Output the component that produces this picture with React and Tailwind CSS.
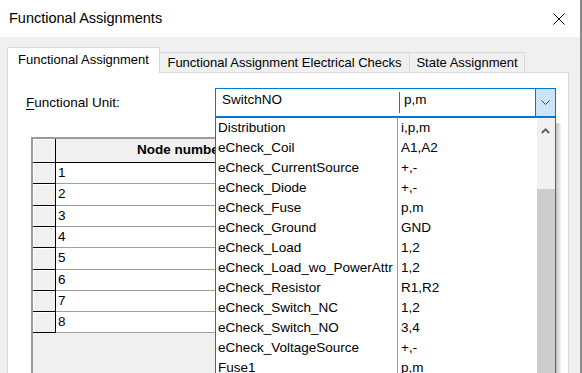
import React from "react";

const listItems = [
  ["Distribution", "i,p,m"],
  ["eCheck_Coil", "A1,A2"],
  ["eCheck_CurrentSource", "+,-"],
  ["eCheck_Diode", "+,-"],
  ["eCheck_Fuse", "p,m"],
  ["eCheck_Ground", "GND"],
  ["eCheck_Load", "1,2"],
  ["eCheck_Load_wo_PowerAttr", "1,2"],
  ["eCheck_Resistor", "R1,R2"],
  ["eCheck_Switch_NC", "1,2"],
  ["eCheck_Switch_NO", "3,4"],
  ["eCheck_VoltageSource", "+,-"],
  ["Fuse1", "p,m"],
];

const gridRows = [
  { n: "1", h: "h-[21px]" },
  { n: "2", h: "h-[22px]" },
  { n: "3", h: "h-[21px]" },
  { n: "4", h: "h-[21px]" },
  { n: "5", h: "h-[22px]" },
  { n: "6", h: "h-[21px]" },
  { n: "7", h: "h-[21px]" },
  { n: "8", h: "h-[21px]" },
];

export default function App() {
  return (
    <div className="relative w-[582px] h-[373px] overflow-hidden bg-[#f0f0f0] border-r-2 border-[#8a8a8a] font-['Liberation_Sans',Arial,sans-serif] text-black">
      {/* Title bar */}
      <div className="h-[37px] bg-white flex items-center justify-between pl-[9px] pr-[15px]">
        <span className="text-[14.5px] leading-none">Functional Assignments</span>
        <svg width="12" height="12" viewBox="0 0 12 12" className="block">
          <path d="M0.5 0.5 L11.5 11.5 M11.5 0.5 L0.5 11.5" stroke="#000" strokeWidth="1" fill="none" />
        </svg>
      </div>

      {/* Tabs */}
      <div className="mt-[10px] pl-[7px] flex items-end h-[25px] text-[13px]">
        <div className="relative z-10 w-[153px] h-[26px] -mb-px bg-white border border-b-0 border-[#d9d9d9] flex items-center justify-center pb-[2px]">
          Functional Assignment
        </div>
        <div className="w-[251px] h-[20px] -ml-px bg-[#f0f0f0] border border-b-0 border-[#d9d9d9] flex items-center justify-center">
          Functional Assignment Electrical Checks
        </div>
        <div className="w-[116px] h-[20px] -ml-px bg-[#f0f0f0] border border-b-0 border-[#d9d9d9] flex items-center justify-center">
          State Assignment
        </div>
      </div>

      {/* Panel */}
      <div className="ml-[7px] w-[562px] h-[320px] bg-white border border-[#d9d9d9] pt-[15px] text-[13.5px]">
        <div className="flex items-center">
          <div className="w-[207px] pl-[18px] leading-4">
            <span className="underline underline-offset-2">F</span>unctional Unit:
          </div>
          <div className="w-[341px] h-[29px] border border-[#0078d7] flex">
            <div className="w-[183px] pl-[6px] pt-[3px] leading-4">SwitchNO</div>
            <div className="w-px h-[21px] mt-[3px] bg-[#606060]" />
            <div className="flex-1 pl-[4px] pt-[3px] leading-4">p,m</div>
            <div className="w-[20px] h-full bg-[#cce4f7] border-l border-[#0078d7] flex items-center justify-center">
              <svg width="9" height="5" viewBox="0 0 9 5" className="block">
                <path d="M0.5 0.5 L4.5 4.5 L8.5 0.5" stroke="#444" strokeWidth="1" fill="none" />
              </svg>
            </div>
          </div>
        </div>

        {/* Grid */}
        <div className="mt-[20px] ml-[23px] w-[500px] h-[240px] border-t-2 border-l-2 border-[#9a9a9a] bg-[#f0f0f0] flex flex-col">
          <div className="flex h-[24px]">
            <div className="w-[23px] bg-[#f0f0f0] border-r border-b border-black shadow-[inset_1px_1px_0_#ffffff]" />
            <div className="w-[250px] bg-[#f0f0f0] border-r border-b border-black flex items-center justify-center font-bold">
              Node number
            </div>
            <div className="flex-1 bg-[#f0f0f0] border-b border-black" />
          </div>
          {gridRows.map((r) => (
            <div key={r.n} className={`flex ${r.h}`}>
              <div className="w-[23px] bg-[#f0f0f0] border-r border-b border-black shadow-[inset_1px_1px_0_#ffffff]" />
              <div className="w-[250px] bg-white border-r border-b border-[#a0a0a0] pl-[2px] flex items-center">
                {r.n}
              </div>
              <div className="flex-1 bg-white border-b border-[#a0a0a0]" />
            </div>
          ))}
        </div>
      </div>

      {/* Dropdown shadow */}
      <div className="absolute left-[556px] top-[123px] w-[5px] h-[260px] bg-gradient-to-r from-[#c4c4c4] to-[#f2f2f2]" />

      {/* Dropdown list */}
      <div className="absolute left-[215px] top-[117px] w-[341px] h-[270px] bg-white border-x border-t border-[#0078d7] text-[13.5px]">
        {listItems.map(([a, b]) => (
          <div key={a} className="flex h-[20px]">
            <div className="w-[182px] pl-[2px] border-r border-[#a0a0a0] flex items-center whitespace-nowrap overflow-hidden">
              {a}
            </div>
            <div className="flex-1 pl-[3px] flex items-center">{b}</div>
          </div>
        ))}
        <div className="absolute right-0 top-0 bottom-0 w-[18px] bg-[#f0f0f0]">
          <svg width="9" height="6" viewBox="0 0 9 6" className="absolute left-[4px] top-[10px] block">
            <path d="M0.8 5 L4.5 1.3 L8.2 5" stroke="#606060" strokeWidth="1.8" fill="none" />
          </svg>
          <div className="absolute left-0 right-0 top-[71px] bottom-0 bg-[#cdcdcd]" />
        </div>
      </div>
    </div>
  );
}
